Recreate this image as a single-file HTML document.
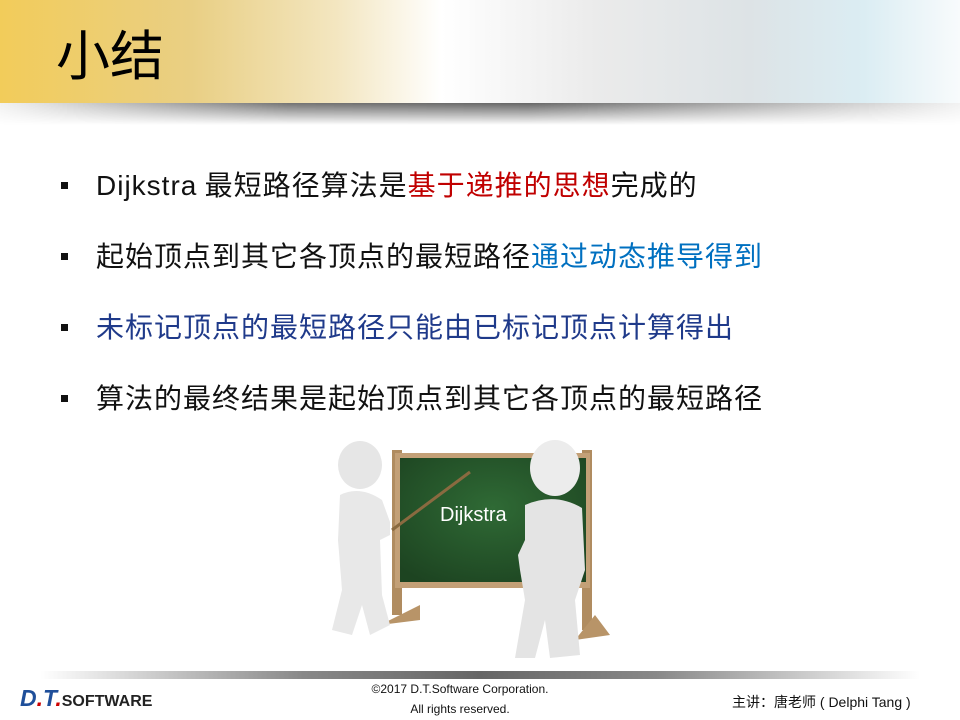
<!DOCTYPE html>
<html><head><meta charset="utf-8"><style>
body{margin:0;width:960px;height:720px;position:relative;background:#fff;overflow:hidden;font-family:"Liberation Sans","Noto Sans CJK SC",sans-serif}
.hdr{position:absolute;left:0;top:0;width:960px;height:103px;background:linear-gradient(90deg,#f2cc5a 0%,#e9cf84 20%,#f3e6c0 35%,#fff 46%,#ebebeb 62%,#dde3e6 78%,#dbedf3 90%,#f8fbfc 100%)}
.sh{position:absolute;left:0;top:103px;width:960px;height:22px;background:linear-gradient(90deg,rgba(0,0,0,0.05),rgba(0,0,0,.55) 30%,rgba(0,0,0,.6) 55%,rgba(0,0,0,.05));-webkit-mask:linear-gradient(#000,transparent);mask:linear-gradient(#000,transparent)}
.title{position:absolute;left:56px;top:20px;font-size:54px;color:#000;font-family:"Noto Sans CJK SC",sans-serif;line-height:64px}
.b{position:absolute;left:96px;font-size:28px;letter-spacing:1px;line-height:34px;color:#111;font-family:"Noto Sans CJK SC",sans-serif;white-space:nowrap}
.sq{position:absolute;left:61px;width:7px;height:7px;background:#111}
.red{color:#c00000}.blue{color:#0070c0}.navy{color:#1f3a8a}
.fl{position:absolute;left:40px;top:671px;width:880px;height:8px;background:linear-gradient(90deg,transparent,#888 30%,#666 50%,#888 70%,transparent)}
.ft{position:absolute;font-size:12px;color:#111;text-align:center}
</style></head><body>
<div class="hdr"></div><div class="sh"></div>
<div class="title">小结</div>
<div class="sq" style="top:182px"></div><div class="b" style="top:167px"><span style="font-family:'Liberation Sans'">Dijkstra</span> 最短路径算法是<span class="red">基于递推的思想</span>完成的</div>
<div class="sq" style="top:253px"></div><div class="b" style="top:238px">起始顶点到其它各顶点的最短路径<span class="blue">通过动态推导得到</span></div>
<div class="sq" style="top:324px"></div><div class="b navy" style="top:309px">未标记顶点的最短路径只能由已标记顶点计算得出</div>
<div class="sq" style="top:395px"></div><div class="b" style="top:380px">算法的最终结果是起始顶点到其它各顶点的最短路径</div>
<svg style="position:absolute;left:320px;top:430px" width="300" height="230">
<defs><radialGradient id="g" cx=".5" cy=".4" r=".7"><stop offset="0" stop-color="#2f6a35"/><stop offset="1" stop-color="#1d4421"/></radialGradient></defs>
<rect x="72" y="20" width="10" height="165" fill="#b08c60"/>
<rect x="262" y="20" width="10" height="180" fill="#b08c60"/>
<rect x="75" y="23" width="195" height="135" fill="#c3a077"/>
<rect x="80" y="28" width="186" height="124" fill="url(#g)"/>
<path d="M60 195 L100 175 L100 190 Z M255 210 L290 205 L275 185Z" fill="#b89468"/>
<text x="120" y="91" fill="#fff" font-size="20" font-family="Liberation Sans,sans-serif">Dijkstra</text>
<line x1="150" y1="42" x2="72" y2="100" stroke="#8a6a40" stroke-width="3"/>
<ellipse cx="40" cy="35" rx="22" ry="24" fill="#e6e6e6"/>
<path d="M20 65 Q40 55 62 70 L70 92 L70 105 L60 110 L62 165 L70 195 L50 205 L42 175 L32 205 L12 200 L22 160 L18 110 Z" fill="#e8e8e8"/>
<ellipse cx="235" cy="38" rx="25" ry="28" fill="#ececec"/>
<path d="M205 75 Q235 62 262 78 L265 140 L255 170 L260 225 L230 228 L225 190 L215 228 L195 228 L205 170 L200 140 L198 125 L205 110 Z" fill="#e4e4e4"/>
</svg>
<div class="fl"></div>
<div style="position:absolute;left:20px;top:685px;font-size:23px;font-weight:bold;font-style:italic;color:#1f4f9a">D<span style="color:#c00">.</span>T<span style="color:#c00">.</span><span style="font-style:normal;font-size:16px;color:#222">SOFTWARE</span></div>
<div class="ft" style="left:340px;top:682px;width:240px">©2017 D.T.Software Corporation.</div>
<div class="ft" style="left:340px;top:702px;width:240px">All rights reserved.</div>
<div class="ft" style="left:732px;top:692px;font-size:14px">主讲：唐老师 ( Delphi Tang )</div>
</body></html>
